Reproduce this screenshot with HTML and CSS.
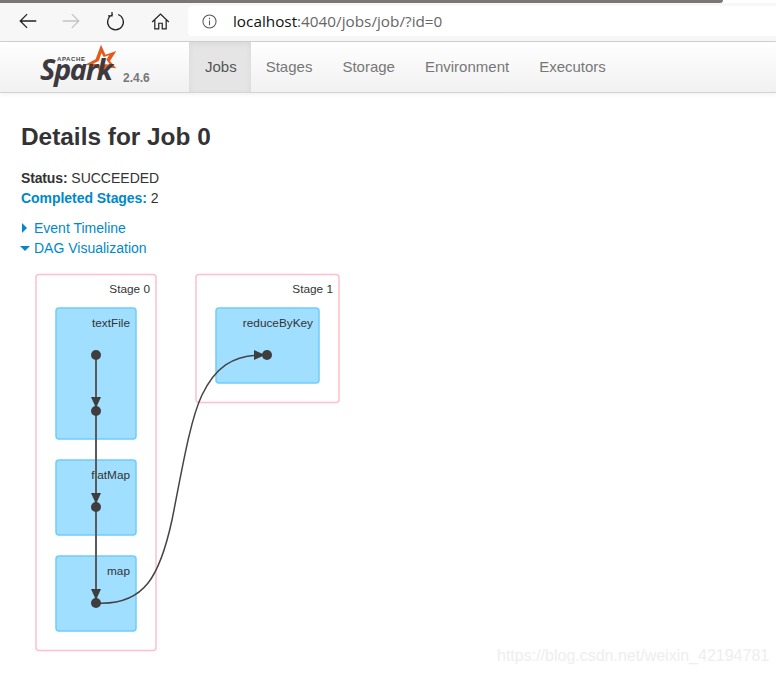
FILE: index.html
```html
<!DOCTYPE html>
<html lang="en">
<head>
<meta charset="utf-8">
<title>Details for Job 0</title>
<link rel="stylesheet" href="styles.css">
</head>
<body>
<div class="loadbar"></div>
<header class="toolbar">
  <svg class="tool back" viewBox="0 0 24 24"><path d="M21 12H4M11 4.500L3.500 12L11 19.500" class="ic"/></svg>
  <svg class="tool fwd" viewBox="0 0 24 24"><path d="M3 12H20M13 4.500L20.500 12L13 19.500" class="ic dim"/></svg>
  <svg class="tool reload" viewBox="0 0 24 24"><path d="M9 4A9 9 0 1 0 15 4M8 1V5.500H3.500" class="ic"/></svg>
  <svg class="tool home" viewBox="0 0 24 24"><path d="M2.500 12.500L12 3.500L21.500 12.500M5.500 10V20.500H10V14H14V20.500H18.500V10" class="ic"/></svg>
  <div class="address">
    <svg class="info" viewBox="0 0 16 16"><circle cx="8" cy="8" r="7" class="ic thin"/><path d="M8 7V12M8 4V5.500" class="ic thin"/></svg>
    <span class="url"><span class="host">localhost</span>:4040/jobs/job/?id=0</span>
  </div>
</header>
<nav class="navbar">
  <div class="brand">
    <div class="logo">
      <svg class="star" viewBox="0 0 40 40"><path d="M20 2L25 13L37 9L30 20L37 28L26 27L21 37L16 27L3 24L14 18Z M20.500 11L17.500 20L11 23L18 24L21 29L23.500 23.500L30 24L26 18.500L29 13.500L23 15.500Z" fill-rule="evenodd"/></svg>
      <span class="apache">APACHE</span>
      <span class="spark">Spark</span>
    </div>
    <span class="version">2.4.6</span>
  </div>
  <ul class="tabs">
    <li class="tab active">Jobs</li>
    <li class="tab">Stages</li>
    <li class="tab">Storage</li>
    <li class="tab">Environment</li>
    <li class="tab">Executors</li>
  </ul>
</nav>
<main class="content">
  <h3 class="title">Details for Job 0</h3>
  <ul class="summary">
    <li><strong>Status:</strong> SUCCEEDED</li>
    <li><strong class="link">Completed Stages:</strong> 2</li>
  </ul>
  <div class="toggle"><span class="arrow right"></span><span class="link">Event Timeline</span></div>
  <div class="toggle"><span class="arrow down"></span><span class="link">DAG Visualization</span></div>
  <svg class="dag" viewBox="20 265 330 395" width="330" height="395">
    <rect class="stage" x="36" y="274.500" width="120" height="376" rx="3"/>
    <rect class="stage" x="196" y="274.500" width="143" height="128" rx="3"/>
    <text class="label" x="150" y="293">Stage 0</text>
    <text class="label" x="333" y="293">Stage 1</text>
    <rect class="node" x="56" y="308" width="80" height="131" rx="3"/>
    <rect class="node" x="56" y="460" width="80" height="75" rx="3"/>
    <rect class="node" x="56" y="556" width="80" height="75" rx="3"/>
    <rect class="node" x="216" y="308" width="103" height="75" rx="3"/>
    <text class="label op" x="130" y="327">textFile</text>
    <text class="label op" x="130" y="479">flatMap</text>
    <text class="label op" x="130" y="575">map</text>
    <text class="label op" x="313" y="327">reduceByKey</text>
    <path class="edge" d="M96 355V405"/>
    <path class="edge" d="M96 411V501"/>
    <path class="edge" d="M96 507V597"/>
    <path class="edge curve" d="M96 603C145 606 160 575 172 520C182 470 190 420 202 395C215 368 232 355 262 355"/>
    <path class="head" d="M91 397H101L96 408Z"/>
    <path class="head" d="M91 493H101L96 504Z"/>
    <path class="head" d="M91 589H101L96 600Z"/>
    <path class="head" d="M254 350V360L265 355Z"/>
    <circle class="dot" cx="96" cy="355" r="5"/>
    <circle class="dot" cx="96" cy="411" r="5"/>
    <circle class="dot" cx="96" cy="507" r="5"/>
    <circle class="dot" cx="96" cy="603" r="5"/>
    <circle class="dot" cx="267" cy="355" r="5"/>
  </svg>
</main>
<div class="watermark">https://blog.csdn.net/weixin_42194781</div>
</body>
</html>
```
FILE: styles.css
```css
* { box-sizing: border-box; }
html, body { margin: 0; padding: 0; }
body {
  position: relative;
  width: 776px;
  height: 675px;
  overflow: hidden;
  background: #fff;
  color: #333;
  font-family: "Liberation Sans", Arial, sans-serif;
  font-size: 14px;
}
.loadbar {
  height: 3px;
  width: 723px;
  background: #7a7874;
  border-radius: 0 0 3px 0;
}
.toolbar {
  height: 39px;
  background: #f7f7f7;
  border-bottom: 1px solid #d2d2d2;
  display: flex;
  align-items: center;
  padding: 0 0 2px 17px;
}
.tool { flex: none; width: 21px; height: 21px; }
.back { width: 22px; height: 22px; margin-right: 21px; }
.fwd { width: 22px; height: 22px; margin-right: 23px; }
.reload { margin-right: 24px; }
.home { margin-right: 17px; }
.ic { fill: none; stroke: #222; stroke-width: 1.400; }
.ic.dim { stroke: #c4c4c4; }
.ic.thin { stroke: #555; stroke-width: 1.100; }
.address {
  flex: 1;
  height: 30px;
  background: #fff;
  border-radius: 4px 0 0 4px;
  display: flex;
  align-items: center;
  padding-left: 14px;
}
.info { width: 15px; height: 15px; margin-right: 16px; }
.url { font-size: 15.300px; font-family: "Open Sans", "Liberation Sans", sans-serif; color: #666; }
.host { color: #111; }
.navbar {
  height: 51px;
  display: flex;
  background: linear-gradient(#fff, #f1f1f1);
  border-bottom: 1px solid #d4d4d4;
  box-shadow: 0 1px 4px rgba(0,0,0,.07);
}
.brand { width: 189px; display: flex; padding-left: 40px; flex: none; }
.logo { position: relative; width: 80px; height: 50px; }
.star { position: absolute; left: 43px; top: 1px; width: 36px; height: 36px; fill: #e25a1c; }
.apache {
  position: absolute; left: 17px; top: 14px;
  font-size: 6px; line-height: 7px; font-weight: bold; color: #444; letter-spacing: .6px;
}
.spark {
  position: absolute; left: 0; top: 21px;
  font-size: 29px; font-weight: bold; font-style: italic; color: #3c3a3e;
  letter-spacing: -1.400px; line-height: 12px;
  font-family: "Open Sans", "Liberation Sans", sans-serif;
}
.version { font-size: 12px; font-weight: bold; color: #777; margin: 29px 0 0 3px; line-height: 14px; }
.tabs { display: flex; list-style: none; margin: 0; padding: 0; }
.tab {
  font-size: 15px; color: #777;
  padding: 0 15px;
  line-height: 50px;
  height: 50px;
}
.tab.active { background: #e5e5e5; color: #555; padding-left: 16px; padding-right: 14px; box-shadow: inset 0 2px 6px rgba(0,0,0,.06); }
.content { padding: 0 20px; }
.title { margin: 0 0 0 1px; padding-top: 30px; font-size: 24.400px; line-height: 27px; font-weight: bold; color: #333; }
.summary { list-style: none; margin: 18px 0 10px; padding: 0; line-height: 20px; }
.summary li { padding-left: 1px; }
.summary strong { letter-spacing: -.050px; }
.summary li:first-child strong { letter-spacing: -.150px; }
.link { color: #0088cc; }
.toggle { display: flex; align-items: center; height: 20px; }
.arrow { width: 0; height: 0; flex: none; }
.arrow.right { border-left: 5px solid #0088cc; border-top: 5px solid transparent; border-bottom: 5px solid transparent; margin-left: 2px; margin-right: 7px; }
.arrow.down { border-top: 5px solid #0088cc; border-left: 5px solid transparent; border-right: 5px solid transparent; margin-right: 4px; }
.dag { display: block; margin-top: 7px; }
.stage { fill: #fff; stroke: #ffc0cb; stroke-width: 1.500; }
.node { fill: #a0dfff; stroke: #6fcdfb; stroke-width: 1.500; }
.label { font-size: 11.800px; fill: #333; text-anchor: end; }
.edge { fill: none; stroke: #5a5a5a; stroke-width: 2; }
.edge.curve { stroke: #444; stroke-width: 1.500; }
.head, .dot { fill: #3e3e3e; }
.watermark {
  position: absolute; left: 497px; top: 647px;
  font-size: 16px; color: #eeeeee; white-space: nowrap;
}
```
